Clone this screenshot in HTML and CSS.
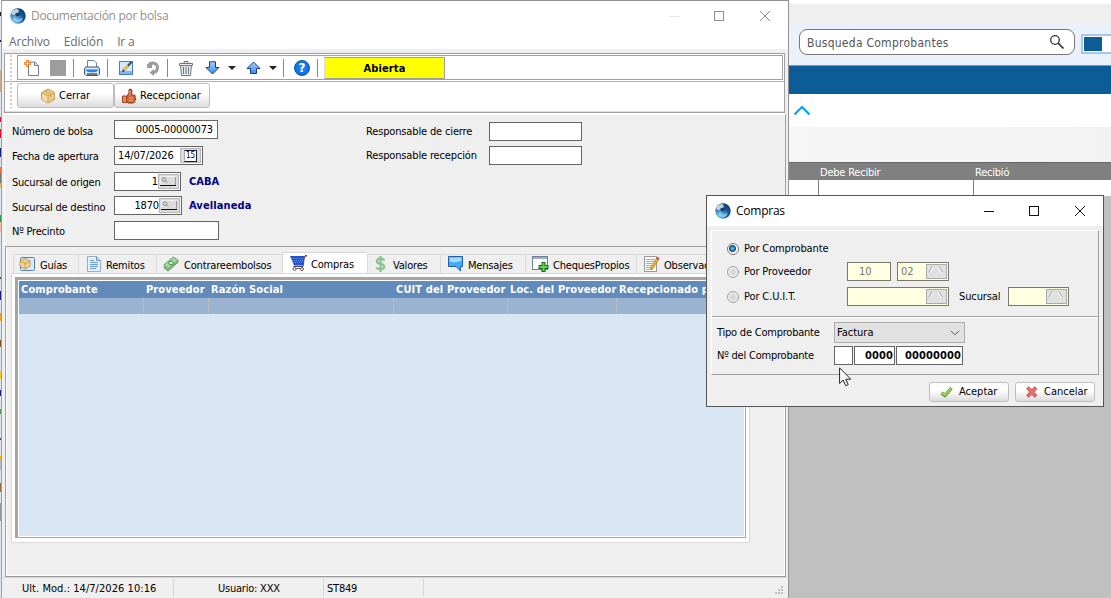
FILE: index.html
```html
<!DOCTYPE html>
<html lang="es">
  <head>
    <meta charset="UTF-8">
    <meta name="viewport" content="width=device-width, initial-scale=1.0">
    <title>Documentación por bolsa</title>
    <link rel="stylesheet" href="styles.css">
  </head>
  <body>
    <!-- Shared icons -->
    <svg class="defs" width="0" height="0">
      <defs>
        <radialGradient id="globeFill" cx=".3" cy=".75" r=".85">
          <stop offset="0" stop-color="#9adcf5"/>
          <stop offset=".3" stop-color="#4a97cc"/>
          <stop offset=".65" stop-color="#1b5590"/>
          <stop offset="1" stop-color="#0c3562"/>
        </radialGradient>
        <linearGradient id="blueFill" x1="0" y1="0" x2="0" y2="1">
          <stop offset="0" stop-color="#9fd0ff"/>
          <stop offset="1" stop-color="#3f8be8"/>
        </linearGradient>
        <symbol id="globe" viewBox="0 0 16 16">
          <circle cx="8" cy="8" r="7.700" fill="url(#globeFill)"/>
          <ellipse cx="5" cy="4" rx="4" ry="2.400" fill="#bdd0de" transform="rotate(-25 5 4)"/>
          <path d="M5 6Q8 3.500 10.500 6Q9 9 6.500 8.500Z" fill="#0f4379"/>
          <path d="M4 11Q8 13 12.500 9.500Q12 14 7.500 14.500Q5 14 4 11Z" fill="#8fd4f0" opacity=".8"/>
        </symbol>
        <symbol id="box" viewBox="0 0 16 16">
          <path d="M1.500 4.500L8 1L14.500 4.500V11.500L8 15L1.500 11.500Z" fill="#eccb85" stroke="#c99b4e"/>
          <path d="M2 5L8 8V14.500L2 11.500Z" fill="#f3daa0"/>
          <path d="M1.500 4.500L8 7.800L14.500 4.500M8 7.800V15M4.500 3L11 6V9" fill="none" stroke="#d2a75c"/>
        </symbol>
        <symbol id="lens" viewBox="0 0 21 15">
          <rect x=".5" y=".5" width="20" height="14" fill="#dcdcdc" stroke="#b5b5b5"/>
          <path d="M2.500 11V2.500H18" fill="none" stroke="#f0f0f0"/>
          <path d="M2 11.500H18" stroke="#111"/>
          <path d="M17.500 3V11" stroke="#999"/>
          <circle cx="6" cy="5.500" r="1.800" fill="none" stroke="#888"/>
          <path d="M7.300 6.800L9.500 8.500" stroke="#888"/>
        </symbol>
        <symbol id="lensOff" viewBox="0 0 21 15">
          <rect x=".5" y=".5" width="20" height="14" fill="#e0e0e0" stroke="#aaa"/>
          <path d="M4 9L6.500 3.500M12.500 3.500L15.500 8.500" fill="none" stroke="#fff" stroke-width="1.500"/>
          <path d="M3.300 8.500L5.800 2.500M13 2.500L16.300 8" fill="none" stroke="#999" stroke-width=".9"/>
        </symbol>
      </defs>
    </svg>

    <!-- Background application -->
    <div class="side-strip"></div>
    <div class="app-back">
      <div class="back-top"></div>
      <div class="back-search">
        <div class="search-box">
          <span>Busqueda Comprobantes</span>
          <svg width="16" height="16" viewBox="0 0 16 16" fill="none" stroke="#333">
            <circle cx="6" cy="6" r="4.300" stroke-width="1.300"/>
            <path d="M9 9L14.500 14.500" stroke-width="1.700"/>
          </svg>
        </div>
        <div class="color-box"><i></i></div>
      </div>
      <div class="back-bar"></div>
      <div class="back-collapse">
        <svg width="18" height="11" viewBox="0 0 18 11"><path d="M1.500 9.500L9 2L16.500 9.500" fill="none" stroke="#00a2f2" stroke-width="2"/></svg>
      </div>
      <div class="back-gray"></div>
      <div class="back-head"><span>Debe Recibir</span><span>Recibió</span></div>
      <div class="back-row"><span></span><span></span></div>
    </div>

    <!-- Main window -->
    <div class="window main-window">
      <div class="title-bar">
        <svg width="16" height="16"><use href="#globe"/></svg>
        <h1>Documentación por bolsa</h1>
        <svg class="win-buttons" width="110" height="12" viewBox="0 0 110 12" fill="none" stroke="#8c8c8c">
          <path d="M0 6.500H10" stroke="#e3e3e3"/>
          <rect x="45.500" y="1.500" width="9" height="9"/>
          <path d="M91 1L101 11M101 1L91 11"/>
        </svg>
      </div>
      <div class="menu-bar"><span>Archivo</span><span>Edición</span><span>Ir a</span></div>

      <div class="toolbars">
        <div class="toolbar">
          <i class="grip"></i>
          <div class="toolbar-frame">
            <svg class="ic-new" width="18" height="18" viewBox="0 0 18 18">
              <path d="M5.500 3V16.500H15.500V6.500L12 3Z" fill="#fff" stroke="#7478a8"/>
              <path d="M11.500 3V6.500H15.500" fill="#e4e8f5" stroke="#7478a8"/>
              <path d="M4.500 1V8M1 4.500H8" stroke="#f07a1c" stroke-width="2.600"/>
              <path d="M4.500 2V7M2 4.500H7" stroke="#ffd08a"/>
            </svg>
            <i class="ic-stop"></i>
            <i class="sep"></i>
            <svg class="ic-print" width="18" height="18" viewBox="0 0 18 18">
              <path d="M4.500 8V1.500H11L13.500 4V8" fill="#fff" stroke="#6a86a6"/>
              <path d="M2.500 8L1.500 10V15L3 16.500H15L16.500 15V10L15.500 8Z" fill="#dce8f2" stroke="#3a5674"/>
              <path d="M3 10.500H15V12Q9 14.500 3 12Z" fill="#1787e8"/>
              <path d="M4 15H14" stroke="#111"/>
            </svg>
            <i class="sep"></i>
            <svg class="ic-edit" width="16" height="16" viewBox="0 0 16 16">
              <rect x="1.500" y="1.500" width="13" height="13" fill="#d5eafc" stroke="#4a7db5"/>
              <path d="M2 11H14V14H2Z" fill="#7db8ee"/>
              <path d="M6.500 9.500L13.500 2" stroke="#3f526a" stroke-width="2.400"/>
              <path d="M6 10L10 5.800" stroke="#f6c842" stroke-width="2"/>
              <path d="M4 12L7 11L5 9Z" fill="#333"/>
            </svg>
            <svg class="ic-undo" width="14" height="16" viewBox="0 0 14 16">
              <path d="M2.500 6Q3 3 7 3Q11.500 3.500 11.500 8Q11 12.500 6 12.500" fill="none" stroke="#9b9b9b" stroke-width="3"/>
              <path d="M8 9V16L3.500 12.500ZM1 4H6V8H1Z" fill="#9b9b9b"/>
            </svg>
            <i class="sep"></i>
            <svg class="ic-trash" width="16" height="16" viewBox="0 0 16 16" fill="none" stroke="#6f7880">
              <path d="M2.500 5L3.500 15.500H12.500L13.500 5Z" fill="#e3e7ea"/>
              <path d="M1.500 3.500H14.500V5.500H1.500ZM6 3V1.500H10V3" fill="#eef0f2"/>
              <path d="M5.500 7V14M8 7V14M10.500 7V14"/>
            </svg>
            <svg class="ic-arrow" width="15" height="14" viewBox="0 0 15 14">
              <path d="M4.500 .8H10.500V6.500H14L7.500 13L1 6.500H4.500Z" fill="url(#blueFill)" stroke="#123f85"/>
            </svg>
            <i class="drop"></i>
            <svg class="ic-arrow up" width="15" height="14" viewBox="0 0 15 14">
              <path d="M4.500 12.500H10.500V7.500H14L7.500 1L1 7.500H4.500Z" fill="url(#blueFill)" stroke="#123f85"/>
            </svg>
            <i class="drop"></i>
            <i class="sep short"></i>
            <div class="help">?</div>
            <i class="sep"></i>
            <div class="state">Abierta</div>
          </div>
        </div>
        <div class="toolbar second">
          <i class="grip"></i>
          <div class="btn btn-bar">
            <svg width="16" height="16"><use href="#box"/></svg>
            <span>Cerrar</span>
          </div>
          <div class="btn btn-bar btn-wide">
            <svg width="15" height="16" viewBox="0 0 15 16">
              <path d="M5 8Q8 5 7 1.500Q9.500 0 10 3L9.500 7H12.500Q14 8 13 9.500Q14.500 11 13 12Q13.500 13.500 11.500 15H6L4 13Z" fill="#d1693c" stroke="#8c2f16"/>
              <path d="M.5 8H4.500V14.500H.5Z" fill="#e98a58" stroke="#a3431f"/>
              <path d="M8 3V7.500M7 10H11M7 12.500H11" stroke="#f2a57c"/>
            </svg>
            <span>Recepcionar</span>
          </div>
        </div>
      </div>

      <div class="form-panel">
        <div class="form-col">
          <div class="row r26"><label class="low">Número de bolsa</label><span class="field w104 right">0005-00000073</span></div>
          <div class="row r26"><label>Fecha de apertura</label><span class="field w89"><b class="txt">14/07/2026</b><span class="cal"><b>15</b></span></span></div>
          <div class="row r24"><label>Sucursal de origen</label><span class="field w67 tight">1<svg width="21" height="15"><use href="#lens"/></svg></span><strong>CABA</strong></div>
          <div class="row r25"><label class="low">Sucursal de destino</label><span class="field w68 tight">1870<svg width="21" height="15"><use href="#lens"/></svg></span><strong class="near">Avellaneda</strong></div>
          <div class="row r19"><label>Nº Precinto</label><span class="field w105"></span></div>
        </div>
        <div class="form-col resp">
          <div class="row r24"><label>Responsable de cierre</label><span class="field w93"></span></div>
          <div class="row r19"><label class="low">Responsable recepción</label><span class="field w93"></span></div>
        </div>
      </div>

      <div class="tabs-panel">
        <div class="tabs">
          <div class="tab t1">
            <svg width="16" height="16" viewBox="0 0 16 16"><rect x="1.500" y="1.500" width="14" height="13" rx="1" fill="#d9eafa" stroke="#5580b5"/><path d="M1 5L6 2.500L11 5V10.500L6 13L1 10.500Z" fill="#f0d49a" stroke="#c39a50"/><path d="M1 5L6 7.500L11 5M6 7.500V13" fill="none" stroke="#c39a50"/></svg>
            <span>Guías</span>
          </div>
          <div class="tab t2">
            <svg width="14" height="16" viewBox="0 0 14 16"><path d="M.5 .5H9.500L13.500 4.500V15.500H.5Z" fill="#e5f0fc" stroke="#93aed2"/><path d="M9.500 .5V4.500H13.500" fill="#b9d3ee" stroke="#6d93c6"/><path d="M3 6.500H11M3 8.500H11M3 10.500H11M3 12.500H9M3 4.500H7" stroke="#6b9cd6"/></svg>
            <span>Remitos</span>
          </div>
          <div class="tab t3">
            <svg width="16" height="16" viewBox="0 0 16 16"><path d="M.8 11.500L11.500 3L15.300 6L5 15Z" fill="#8cc58b" stroke="#53975a"/><path d="M.8 9L10.500 1L15.300 4.500L5 12.800Z" fill="#a3d8a0" stroke="#5da163"/><ellipse cx="8" cy="7" rx="2.400" ry="1.700" fill="#d3f0d0" stroke="#4d9555"/></svg>
            <span>Contrareembolsos</span>
          </div>
          <div class="tab t4 active">
            <svg width="17" height="17" viewBox="0 0 17 17"><path d="M0 1H14.500L13 10.500H4Z" fill="#2452c4"/><path d="M1.500 3.500H14M2 5.500H13.500M3 7.500H13.500" stroke="#6d9cf5" stroke-dasharray="1 1"/><path d="M16 1L14.500 1.500L13 11.500H3.500" fill="none" stroke="#3e4368"/><circle cx="4.500" cy="14" r="1.500" fill="#eee" stroke="#7b5a5a"/><circle cx="12" cy="14" r="1.500" fill="#eee" stroke="#7b5a5a"/><path d="M6 13.500H10.500" stroke="#7b5a5a"/><path d="M15 .8H17" stroke="#c22" stroke-width="1.600"/></svg>
            <span>Compras</span>
          </div>
          <div class="tab t5">
            <svg width="11" height="16" viewBox="0 0 11 16" fill="none"><path d="M9.500 4.500Q8 2.700 5.500 2.700Q1.700 2.800 1.800 5.200Q2 7.300 5.500 7.800Q9.300 8.500 9.200 11Q8.800 13.200 5.500 13.200Q2.500 13.200 1.200 11.300M5.500 0V16" stroke="#8bc292" stroke-width="2.300"/></svg>
            <span>Valores</span>
          </div>
          <div class="tab t6">
            <svg width="15" height="16" viewBox="0 0 15 16"><path d="M.5 .5H14.500V10.500H12.500V15L8 10.500H.5Z" fill="#45aaf8" stroke="#1c5cb0"/><path d="M1.500 1.500H13.500V5Q7 7 1.500 5.500Z" fill="#a6dafd"/></svg>
            <span>Mensajes</span>
          </div>
          <div class="tab t7">
            <svg width="17" height="16" viewBox="0 0 17 16"><rect x=".5" y=".5" width="15" height="13" fill="#fff" stroke="#6f7f92"/><path d="M1 2H15" stroke="#9db0c6" stroke-width="2"/><path d="M11.500 6V16M6.500 11H16.500" stroke="#176d1b" stroke-width="4"/><path d="M11.500 7V15M7.500 11H15.500" stroke="#63d34b" stroke-width="2"/></svg>
            <span>ChequesPropios</span>
          </div>
          <div class="tab t8">
            <svg width="16" height="16" viewBox="0 0 16 16"><rect x=".5" y=".5" width="12" height="15" fill="#fff" stroke="#999"/><path d="M2 3.500H11M2 5.500H11M2 7.500H9M2 9.500H8M2 11.500H7M2 13.500H6" stroke="#aaa"/><path d="M7 13.500L13.500 3" stroke="#b36d0c" stroke-width="2.600"/><path d="M7.500 12.500L13.500 3" stroke="#ffc83a" stroke-width="1.400"/><path d="M13.300 3.500L14.500 1.500" stroke="#c0583a" stroke-width="2.600"/></svg>
            <span>Observaciones</span>
          </div>
        </div>
        <div class="tab-body">
          <div class="grid">
            <div class="grid-head">
              <span>Comprobante</span><span>Proveedor</span><span>Razón Social</span><span>CUIT del Proveedor</span><span>Loc. del Proveedor</span><span>Recepcionado por</span>
            </div>
            <div class="grid-row"><span></span><span></span><span></span><span></span><span></span><span></span></div>
          </div>
        </div>
      </div>

      <div class="status-bar">
        <span class="s1">Ult. Mod.: 14/7/2026 10:16</span>
        <span class="s2">Usuario: XXX</span>
        <span class="s3">ST849</span>
        <svg width="9" height="9" viewBox="0 0 9 9" fill="#bfbfbf"><path d="M6 0H8V2H6ZM3 3H5V5H3ZM6 3H8V5H6ZM0 6H2V8H0ZM3 6H5V8H3ZM6 6H8V8H6Z"/></svg>
      </div>
    </div>

    <!-- Purchases dialog -->
    <div class="window dialog">
      <div class="title-bar">
        <svg width="16" height="16"><use href="#globe"/></svg>
        <h1>Compras</h1>
        <svg class="win-buttons" width="110" height="12" viewBox="0 0 110 12" fill="none" stroke="#111">
          <path d="M0 6.500H10"/>
          <rect x="45.500" y="1.500" width="9" height="9"/>
          <path d="M91 1L101 11M101 1L91 11"/>
        </svg>
      </div>
      <div class="dialog-panel">
        <div class="options">
          <div class="opt o1"><i class="radio on"></i><label>Por Comprobante</label></div>
          <div class="opt o2">
            <i class="radio"></i><label>Por Proveedor</label>
            <span class="field off w44">10</span>
            <span class="field off w52 pick">02<svg width="21" height="15"><use href="#lensOff"/></svg></span>
          </div>
          <div class="opt o3">
            <i class="radio"></i><label>Por C.U.I.T.</label>
            <span class="field off w102 pick"><svg width="21" height="15"><use href="#lensOff"/></svg></span>
            <label class="suc">Sucursal</label>
            <span class="field off w61 pick"><svg width="21" height="15"><use href="#lensOff"/></svg></span>
          </div>
        </div>
        <div class="voucher">
          <div class="row"><label>Tipo de Comprobante</label>
            <span class="select">Factura<svg width="10" height="6" viewBox="0 0 10 6"><path d="M1 .8L5 4.800L9 .8" fill="none" stroke="#555"/></svg></span>
          </div>
          <div class="row nums"><label>Nº del Comprobante</label>
            <span class="field w19"></span><span class="field w41 num">0000</span><span class="field w67 num">00000000</span>
          </div>
        </div>
      </div>
      <div class="dialog-buttons">
        <div class="btn">
          <svg width="13" height="12" viewBox="0 0 13 12"><path d="M1.500 7L5 9.500L11.500 2" fill="none" stroke="#5f9c33" stroke-width="3.400"/><path d="M1.800 7L5 9L11 2.300" fill="none" stroke="#9ed463" stroke-width="1.800"/></svg>
          <span>Aceptar</span>
        </div>
        <div class="btn">
          <svg width="12" height="12" viewBox="0 0 12 12"><path d="M1.500 1.500L10 10.500M10 1.500L1.500 10.500" stroke="#c04848" stroke-width="3.600"/><path d="M2 2L9.500 10M9.500 2L2 10" stroke="#ee7272" stroke-width="2.200"/></svg>
          <span>Cancelar</span>
        </div>
      </div>
    </div>

    <svg class="cursor" width="13" height="20" viewBox="0 0 13 20"><path d="M.6 .8V16.500L4.200 13L6.700 18.700L9.200 17.600L6.800 12.200H11.700Z" fill="#fff" stroke="#222"/></svg>
  </body>
</html>
```
FILE: styles.css
```css
/* Variables */
:root {
	--face: #efefef;
	--line: #a0a0a0;
	--field: #646464;
	--navy: #000080;
	--blue-bar: #0c5c97;
	--ui: "DejaVu Sans Condensed", "DejaVu Sans", sans-serif;
	--title: "Open Sans", "Noto Sans", sans-serif;
}

/* Resets */
* {
	margin: 0;
	padding: 0;
	box-sizing: border-box;
}

body {
	width: 1111px;
	height: 598px;
	overflow: hidden;
	position: relative;
	background: #c0c0c0;
	font-family: var(--ui);
	font-size: 11px;
	line-height: 14px;
	letter-spacing: -0.22px;
	color: #000;
	white-space: nowrap;
}

svg {
	display: block;
	flex-shrink: 0;
}

i {
	display: block;
	flex-shrink: 0;
}

.defs {
	position: absolute;
}

/* Background application */
.side-strip {
	position: absolute;
	left: 0;
	top: 0;
	width: 2px;
	height: 598px;
	background: linear-gradient(#fff 0 12px, #222 12px 16px, #dce7f2 16px 40px, #222 40px 42px, #dce7f2 42px 70px, #c7a98b 70px 92px, #dce7f2 92px 117px, #e0102a 117px 122px, #dce7f2 122px 129px, #e0102a 129px 138px, #dce7f2 138px 148px, #1b1f82 148px 157px, #dce7f2 157px 167px, #e86a32 167px 173px, #777 173px 183px, #e9c04e 183px 188px, #dce7f2 188px 215px, #2d9a4a 215px 222px, #f2b8a8 222px 232px, #dce7f2 232px 277px, #5a4a2a 277px 279px, #dce7f2 279px 291px, #1b1f82 291px 300px, #dce7f2 300px 313px, #f09a18 313px 321px, #dce7f2 321px 340px, #7a5520 340px 347px, #dce7f2 347px 371px, #f5c518 371px 379px, #dce7f2 379px 390px, #1b1f82 390px 396px, #dce7f2 396px 409px, #5a9a3a 409px 414px, #dce7f2 414px 438px, #57483a 438px 440px, #dce7f2 440px 456px, #f3b10a 456px 459px, #bbb 459px 470px, #dce7f2 470px 483px, #8d7440 483px 492px, #dce7f2 492px 503px, #8b97a0 503px 521px, #dce7f2 521px 598px);
}

.app-back {
	position: absolute;
	left: 788px;
	top: 0;
	width: 323px;
	overflow: hidden;
}

.back-top {
	height: 24px;
	background: var(--face);
	border-top: 4px solid #fff;
}

.back-search {
	height: 42px;
	display: flex;
	align-items: flex-start;
	background: #eaf1fb;
	border-bottom: 1px solid #8d949b;
	padding: 5px 0 0 11px;
}

.search-box {
	width: 276px;
	height: 26px;
	display: flex;
	flex-shrink: 0;
	align-items: center;
	justify-content: space-between;
	border: 1px solid #777;
	border-radius: 8px;
	background: #fff;
	padding: 0 9px 0 7px;
	font-size: 12px;
	letter-spacing: 0.26px;
	color: #555;
}

.search-box span {
	padding-top: 1px;
}

.color-box {
	width: 40px;
	height: 20px;
	flex-shrink: 0;
	margin: 5px 0 0 6px;
	border: 2px solid #a5c8ee;
	background: #fff;
	padding: 1px;
}

.color-box i {
	width: 18px;
	height: 14px;
	background: var(--blue-bar);
}

.back-bar {
	height: 28px;
	background: var(--blue-bar);
}

.back-collapse {
	height: 33px;
	background: #fff;
	padding: 11px 0 0 5px;
}

.back-gray {
	height: 35px;
	background: linear-gradient(90deg, #f6f6f6, #f2f2f2);
}

.back-head {
	height: 18px;
	display: flex;
	background: #808080;
	border-top: 1px solid #686868;
	color: #fff;
	padding: 3px 0 0 32px;
}

.back-head span:first-child {
	width: 155px;
}

.back-row {
	height: 16px;
	display: flex;
	background: #fff;
	padding-left: 30px;
}

.back-row span {
	width: 155px;
	flex-shrink: 0;
	border-left: 1px solid #808080;
}

/* Windows */
.window {
	position: absolute;
	display: flex;
	flex-direction: column;
	background: var(--face);
}

.main-window {
	left: 1px;
	top: 0;
	width: 788px;
	height: 598px;
	border: 1px solid #929292;
	border-left-color: #8fa3b5;
	border-bottom: 0;
}

.title-bar {
	height: 30px;
	display: flex;
	align-items: center;
	flex-shrink: 0;
	background: #fff;
	padding-left: 8px;
}

.title-bar h1 {
	margin-left: 5px;
	font-family: var(--title);
	font-size: 12px;
	font-weight: 400;
	letter-spacing: -0.3px;
}

.win-buttons {
	margin-right: 9px;
	margin-left: auto;
}

.main-window .title-bar {
	height: 29px;
	color: #929292;
}

.menu-bar {
	height: 19px;
	display: flex;
	flex-shrink: 0;
	gap: 14px;
	background: #fff;
	padding: 5px 0 0 7px;
	font-family: var(--title);
	font-size: 12px;
	letter-spacing: -0.15px;
	color: #6a6a6a;
}

/* Toolbars */
.toolbars {
	height: 60px;
	flex-shrink: 0;
	margin: 4px 3px 0 2px;
	border: 1px solid var(--line);
	background: #fff;
}

.toolbar {
	height: 28px;
	display: flex;
	padding: 1px 1px 0 5px;
	border-bottom: 1px solid #b0b0b5;
}

.toolbar.second {
	height: 30px;
	border-bottom: 1px solid #ddd;
}

.grip {
	width: 2px;
	height: 25px;
	margin-right: 5px;
	background: repeating-linear-gradient(#c8c8c8 0 2px, #fff 2px 4px);
}

.toolbar-frame {
	height: 25px;
	flex-grow: 1;
	display: flex;
	align-items: center;
	border: 1px solid var(--line);
	padding-left: 5px;
}

.ic-stop {
	width: 16px;
	height: 16px;
	margin-left: 9px;
	background: #9d9d9d;
}

.sep {
	width: 1px;
	height: 18px;
	background: #888;
	margin-left: 7px;
}

.sep.short {
	margin-left: 6px;
}

.ic-print { margin-left: 9px; }
.ic-print + .sep { margin-left: 6px; }
.ic-edit { margin-left: 10px; }
.ic-undo { margin-left: 12px; }
.ic-trash { margin-left: 10px; }
.ic-arrow { margin-left: 11px; }
.ic-arrow.up { margin-left: 10px; }

.drop {
	width: 0;
	height: 0;
	margin-left: 8px;
	border: 4px solid transparent;
	border-top-color: #222;
	border-bottom: 0;
}

.help {
	width: 16px;
	height: 16px;
	margin-left: 10px;
	border: 1px solid #0b4fa8;
	border-radius: 50%;
	background: radial-gradient(#1e8cff, #0a63d8);
	color: #fff;
	font: bold 12px/14px "DejaVu Sans", sans-serif;
	letter-spacing: 0;
	text-align: center;
}

.state {
	width: 121px;
	height: 22px;
	margin-left: 6px;
	border: 1px solid var(--line);
	border-left-color: #ddd;
	background: #ff0;
	font-weight: bold;
	line-height: 22px;
	letter-spacing: 0.1px;
	text-align: center;
}

/* Buttons */
.btn {
	width: 80px;
	height: 20px;
	display: flex;
	align-items: center;
	border: 1px solid #bdbdbd;
	border-radius: 3px;
	background: linear-gradient(#fff 40%, #dcdcdc);
	padding: 0 0 1px 10px;
	letter-spacing: 0;
}

.btn-bar {
	width: 97px;
	height: 25px;
	padding: 0 0 0 22px;
}

.btn-bar span {
	margin-left: 3px;
}

.btn-wide {
	width: 96px;
	padding-left: 7px;
}

/* Form */
.form-panel {
	height: 133px;
	flex-shrink: 0;
	display: flex;
	margin: 0 2px 0 2px;
	border-left: 1px solid #fff;
	border-right: 1px solid var(--line);
	border-top: 2px solid #fff;
	padding: 5px 0 0 7px;
}

.form-col {
	width: 354px;
}

.resp {
	padding-top: 2px;
	letter-spacing: -0.15px;
}

.row {
	display: flex;
}

.row label {
	width: 102px;
	padding-top: 4px;
}

.row label.low {
	padding-top: 5px;
}

.resp .row label {
	width: 123px;
	padding-top: 3px;
}

.r26 { height: 26px; }
.r25 { height: 25px; }
.r24 { height: 24px; }
.r19 { height: 19px; }

.row strong {
	margin-left: 8px;
	padding-top: 3px;
	color: var(--navy);
	letter-spacing: 0;
}

.row strong.near {
	margin-left: 7px;
	letter-spacing: 0.1px;
}

.field {
	height: 19px;
	display: flex;
	align-items: center;
	border: 1px solid var(--field);
	background: #fff;
	padding: 0 4px;
	letter-spacing: -0.15px;
}

.field b.txt {
	font-weight: 400;
}

.right,
.tight,
.num {
	justify-content: flex-end;
}

.tight {
	padding-right: 1px;
}

.field.num {
	font-weight: bold;
	letter-spacing: 0.1px;
	padding-right: 1px;
}

.w19 { width: 19px; }
.w41 { width: 41px; }
.w44 { width: 44px; }
.w52 { width: 52px; }
.w61 { width: 61px; }
.w67 { width: 67px; }
.w68 { width: 68px; }
.w89 { width: 89px; }
.w93 { width: 93px; }
.w102 { width: 102px; }
.w104 { width: 104px; }
.w105 { width: 105px; }

.w89 {
	justify-content: space-between;
	padding: 0 1px 0 3px;
}

.cal {
	width: 21px;
	height: 15px;
	display: flex;
	justify-content: center;
	align-items: center;
	border: 1px solid #b5b5b5;
	background: #dcdcdc;
}

.cal b {
	width: 13px;
	height: 12px;
	display: flex;
	justify-content: center;
	border: 1px solid #1a1a3a;
	border-left-color: #aaa;
	background: #fff;
	font-size: 8px;
	font-weight: 400;
	line-height: 10px;
	letter-spacing: -0.2px;
}

/* Tabs */
.tabs-panel {
	height: 331px;
	flex-shrink: 0;
	margin: 0 2px 0 3px;
	border: 1px solid var(--line);
	border-bottom-color: #999;
	box-shadow: inset -1px -1px 0 #fff, inset 1px 0 0 #fff;
	padding: 5px 0 0 5px;
}

.tabs {
	height: 21px;
	display: flex;
	align-items: flex-end;
	padding-left: 2px;
	overflow: hidden;
}

.tab {
	height: 19px;
	display: flex;
	align-items: center;
	flex-shrink: 0;
	border-top: 1px solid #d9d9d9;
	border-left: 1px solid #d9d9d9;
	letter-spacing: -0.18px;
}

.tab span {
	padding-top: 3px;
}

.tab.active {
	height: 21px;
	background: #fff;
}

.t1 { width: 65px; padding-left: 5px; }
.t1 span { margin-left: 5px; }
.t2 { width: 78px; padding-left: 8px; }
.t2 span { margin-left: 5px; }
.t3 { width: 126px; padding-left: 6px; }
.t3 span { margin-left: 5px; }
.t4 { width: 85px; padding-left: 7px; }
.t4 span { margin-left: 4px; }
.t5 { width: 73px; padding-left: 7px; }
.t5 span { margin-left: 7px; }
.t6 { width: 85px; padding-left: 7px; }
.t6 span { margin-left: 5px; }
.t7 { width: 111px; padding-left: 6px; }
.t7 span { margin-left: 4px; }
.t8 { width: 112px; padding-left: 7px; }
.t8 span { margin-left: 4px; }

.tab-body {
	width: 739px;
	height: 270px;
	border: 1px solid #d9d9d9;
	background: #fff;
	padding: 3px;
}

.grid {
	height: 261px;
	width: 731px;
	border: 1px solid #a5a5a5;
	border-width: 3px 1px 1px 3px;
	background: #d8e5f2;
	box-shadow: inset 1px 1px 0 #fff, inset -1px -1px 0 #fff;
	padding: 1px;
	overflow: hidden;
}

.grid-head,
.grid-row {
	display: grid;
	grid-template-columns: 125px 65px 185px 114px 109px 1fr;
	overflow: hidden;
}

.grid-head {
	height: 17px;
	background: #628bbb;
	color: #fff;
	font-weight: bold;
	letter-spacing: 0.12px;
	line-height: 18px;
}

.grid-head span {
	padding-left: 2px;
}

.grid-row {
	height: 16px;
	background: #9ab3d1;
}

.grid-row span {
	border-right: 1px solid #bcbcbc;
}

/* Status bar */
.status-bar {
	display: flex;
	flex-grow: 1;
	padding: 1px 4px 0 0;
	border-top: 1px solid #d5d5d5;
}

.status-bar span {
	height: 17px;
	border-right: 1px solid #d5d5d5;
	padding-top: 3px;
}

.s1 { width: 172px; padding-left: 20px; letter-spacing: 0.05px; }
.s2 { width: 150px; padding-left: 44px; }
.s3 { width: 100px; padding-left: 3px; }

.status-bar svg {
	margin: 7px 0 0 auto;
}

/* Dialog */
.dialog {
	left: 706px;
	top: 195px;
	width: 398px;
	height: 212px;
	border: 1px solid #555;
}

.dialog h1 {
	letter-spacing: -0.25px;
}

.dialog-panel {
	height: 145px;
	margin: 4px 4px 0;
	border: 1px solid var(--line);
	border-top-color: #fff;
	border-left-color: #fff;
}

.options {
	height: 86px;
	border-bottom: 1px solid var(--line);
	padding: 8px 0 0 15px;
}

.opt {
	display: flex;
	align-items: center;
	height: 19px;
}

.o2 { margin-top: 4px; }
.o3 { margin-top: 6px; }

.opt label {
	width: 103px;
	padding-top: 1px;
	letter-spacing: -0.12px;
}

.radio {
	width: 12px;
	height: 12px;
	margin-right: 5px;
	border: 1px solid #a0a0a0;
	border-radius: 50%;
	background: radial-gradient(#d5d5d5 20%, #fff);
}

.radio.on {
	border-color: #777;
	background: radial-gradient(circle at 45% 45%, #7ed0f5 0, #0c4a7c 3px, #fff 4px);
}

.field.off {
	background: #ffffe1;
	border-color: #77776a;
	color: #777;
}

.w44 {
	padding-left: 11px;
	margin-right: 6px;
}

.pick {
	justify-content: space-between;
	padding: 0 1px 0 3px;
}

.pick svg {
	margin-left: auto;
}

.opt .suc {
	width: 49px;
	margin-left: 10px;
}

.voucher {
	border-top: 1px solid #fff;
	padding: 4px 0 0 5px;
}

.voucher label {
	width: 117px;
}

.select {
	width: 131px;
	height: 21px;
	display: flex;
	align-items: center;
	justify-content: space-between;
	border: 1px solid #adadad;
	background: #e1e1e1;
	padding: 0 4px 0 2px;
	letter-spacing: 0;
}

.nums {
	gap: 1px;
	margin-top: 3px;
}

.nums label {
	width: 116px;
	padding-top: 3px;
}

.dialog-buttons {
	display: flex;
	justify-content: flex-end;
	gap: 6px;
	padding: 7px 8px 0 0;
}

.dialog-buttons span {
	margin-left: 6px;
}

/* Mouse pointer over the dialog */
.cursor {
	position: absolute;
	left: 839px;
	top: 367px;
}
```
